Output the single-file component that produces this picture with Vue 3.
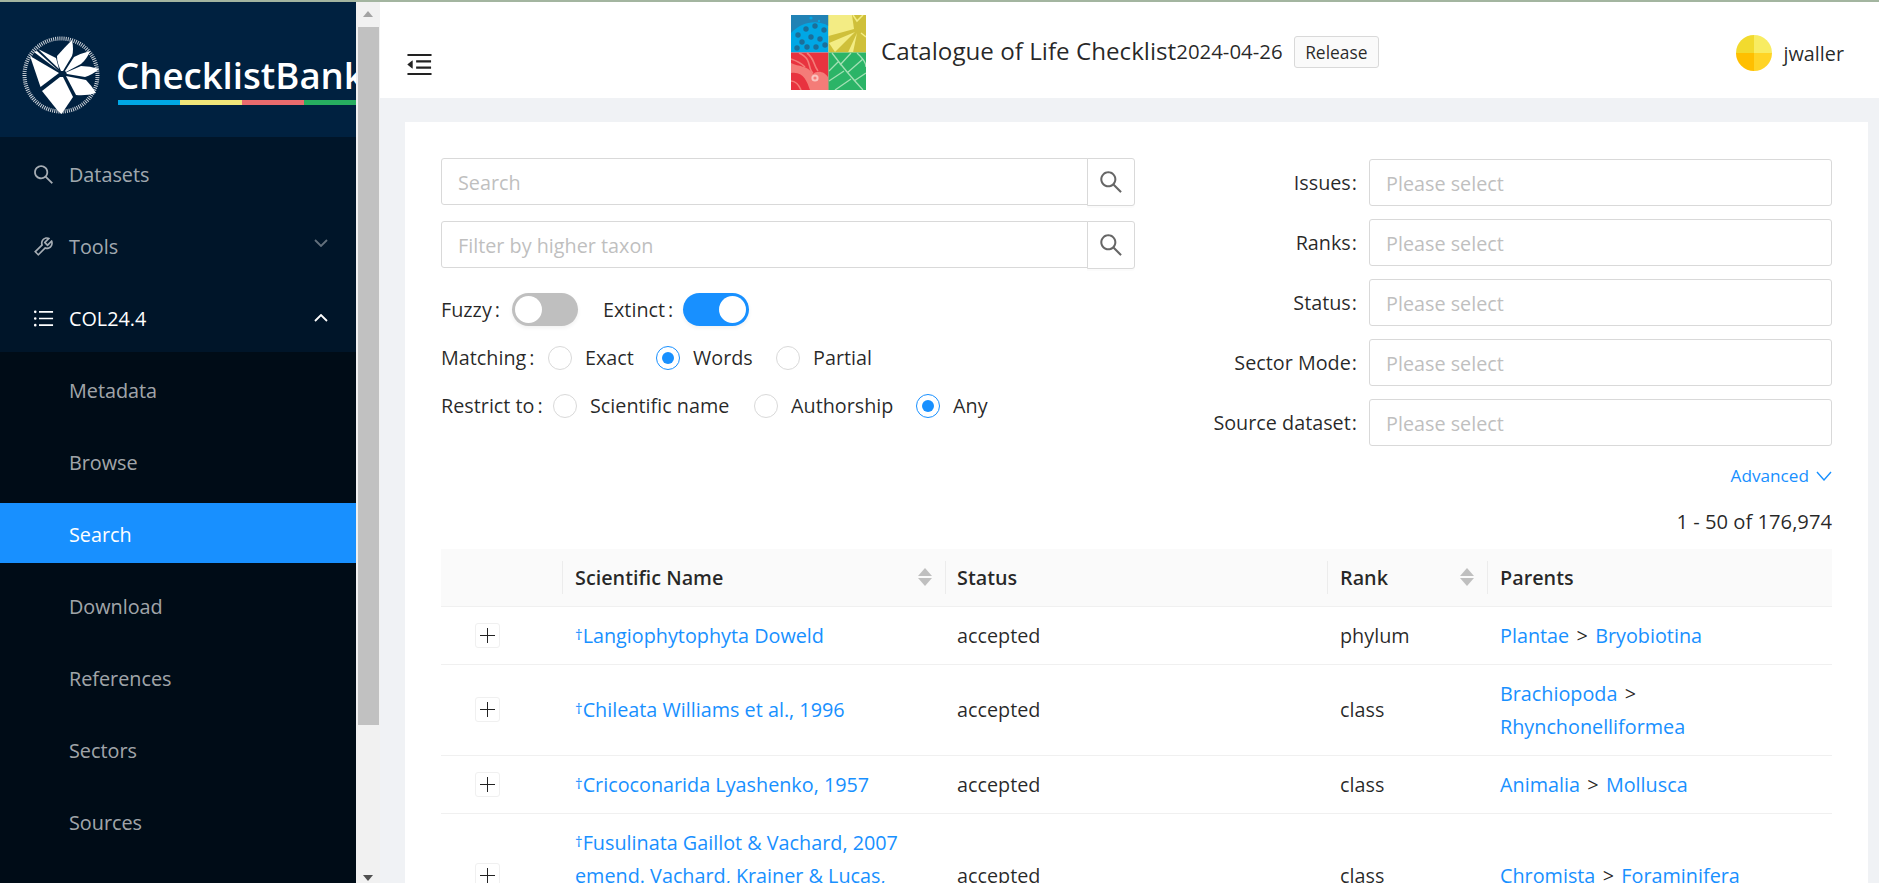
<script setup>
const topMenu = [
  { label: 'Datasets', icon: 'search' },
  { label: 'Tools', icon: 'tool', arrow: 'down' },
  { label: 'COL24.4', icon: 'list', arrow: 'up', open: true },
];
const subMenu = ['Metadata', 'Browse', 'Search', 'Download', 'References', 'Sectors', 'Sources'];
const selects = ['Issues', 'Ranks', 'Status', 'Sector Mode', 'Source dataset'];
const rows = [
  { name: 'Langiophytophyta Doweld', status: 'accepted', rank: 'phylum', parents: ['Plantae', 'Bryobiotina'] },
  { name: 'Chileata Williams et al., 1996', status: 'accepted', rank: 'class', parents: ['Brachiopoda', 'Rhynchonelliformea'] },
  { name: 'Cricoconarida Lyashenko, 1957', status: 'accepted', rank: 'class', parents: ['Animalia', 'Mollusca'] },
  { name: 'Fusulinata Gaillot & Vachard, 2007 emend. Vachard, Krainer & Lucas, 2013', status: 'accepted', rank: 'class', parents: ['Chromista', 'Foraminifera'] },
];
const searchPath = 'M909.6 854.5L649.9 594.8C690.2 542.7 712 479 712 412c0-80.2-31.3-155.4-87.9-212.1-56.6-56.7-132-87.9-212.1-87.9s-155.5 31.3-212.1 87.9C143.2 256.5 112 331.8 112 412c0 80.1 31.3 155.5 87.9 212.1C256.5 680.8 331.8 712 412 712c67 0 130.6-21.9 182.7-62l259.7 259.6a8.2 8.2 0 0011.6 0l43.6-43.5a8.2 8.2 0 000-11.6zM570.4 570.4C528 612.7 471.8 636 412 636s-116-23.3-158.4-65.6C211.3 528 188 471.8 188 412s23.3-116.1 65.6-158.4C296 211.3 352.2 188 412 188s116.1 23.2 158.4 65.6S636 352.2 636 412s-23.3 116.1-65.6 158.4z';
const toolPath = 'M876.6 239.5c-.5-.9-1.2-1.8-2-2.5-5-5-13.1-5-18.1 0L684.2 409.3l-67.9-67.9L788.7 169c.8-.8 1.4-1.6 2-2.5 3.6-6.1 1.6-13.9-4.5-17.5-98.2-58-226.8-44.7-311.3 39.7-67 67-89.2 162-66.5 247.4l-293 293c-3 3-2.8 7.9.3 11l169.7 169.7c3.1 3.1 8.1 3.3 11 .3l292.9-292.9c85.5 22.8 180.5.7 247.6-66.4 84.4-84.5 97.7-213.1 39.7-311.3zM786 499.8c-58.1 58.1-145.3 69.3-214.6 33.6l-8.8 8.8-.1-.1-274 274.1-79.2-79.2 230.1-230.1s0 .1.1.1l52.8-52.8c-35.7-69.3-24.5-156.5 33.6-214.6a184.2 184.2 0 01144-53.5L537 318.9a32.05 32.05 0 000 45.3l124.5 124.5a32.05 32.05 0 0045.3 0l132.8-132.8c3.7 51.8-14.4 104.8-53.6 143.9z';
const listPath = 'M912 192H328c-4.4 0-8 3.6-8 8v56c0 4.4 3.6 8 8 8h584c4.4 0 8-3.6 8-8v-56c0-4.4-3.6-8-8-8zm0 284H328c-4.4 0-8 3.6-8 8v56c0 4.4 3.6 8 8 8h584c4.4 0 8-3.6 8-8v-56c0-4.4-3.6-8-8-8zm0 284H328c-4.4 0-8 3.6-8 8v56c0 4.4 3.6 8 8 8h584c4.4 0 8-3.6 8-8v-56c0-4.4-3.6-8-8-8zM104 228a56 56 0 10112 0 56 56 0 10-112 0zm0 284a56 56 0 10112 0 56 56 0 10-112 0zm0 284a56 56 0 10112 0 56 56 0 10-112 0z';
const foldPath = 'M408 442h480c4.4 0 8-3.6 8-8v-56c0-4.4-3.6-8-8-8H408c-4.4 0-8 3.6-8 8v56c0 4.4 3.6 8 8 8zm-8 204c0 4.4 3.6 8 8 8h480c4.4 0 8-3.6 8-8v-56c0-4.4-3.6-8-8-8H408c-4.4 0-8 3.6-8 8v56zm504-486H120c-4.4 0-8 3.6-8 8v56c0 4.4 3.6 8 8 8h784c4.4 0 8-3.6 8-8v-56c0-4.4-3.6-8-8-8zm0 632H120c-4.4 0-8 3.6-8 8v56c0 4.4 3.6 8 8 8h784c4.4 0 8-3.6 8-8v-56c0-4.4-3.6-8-8-8zM115.4 518.9L271.7 642c5.8 4.6 14.4.5 14.4-6.9V388.9c0-7.4-8.5-11.5-14.4-6.9L115.4 505.1a8.74 8.74 0 000 13.8z';
const icons = { search: searchPath, tool: toolPath, list: listPath };
const dots = [
  [7, 20], [15, 14], [24, 11], [33, 15], [11, 27], [20, 22], [29, 24],
  [6, 33], [16, 32], [25, 32], [34, 30],
];
</script>

<template>
  <div class="page">
    <aside class="sider">
      <div class="brand">
        <svg class="brand-mark" viewBox="0 0 78 78">
          <circle cx="39" cy="39" r="36.5" fill="none" stroke="#fff" stroke-width="4" stroke-dasharray="1 1.1" opacity="0.8" />
          <g fill="#fff">
            <path d="M39 35 Q35 27 35 20 Q42 12 50 4 Q52 14 50 20 L41 35 Z" />
            <path d="M43 35 L52 21 Q60 17 68 15 Q65 23 59 28 L44 36 Z" />
            <path d="M44 36.5 L59 30 Q68 30 77 33 Q70 39 63 41 L45 38 Z" />
            <path d="M44 40 L64 44 Q70 50 74 57 Q64 60 54 59 Z" />
            <path d="M38 41 L20 55 L36 75 L39.5 78 L51 61 L41 41 Z" />
            <path d="M8 20 L37 37 L18.5 51 Z" />
            <path d="M16 13 L34 22 L37 33 Z" />
            <path d="M12 16 L15 15 L37 35 Z" />
          </g>
        </svg>
        <div class="brand-text">
          <div class="brand-name">ChecklistBank</div>
          <div class="brand-bar">
            <span class="seg-blue"></span><span class="seg-yellow"></span><span class="seg-red"></span><span class="seg-green"></span>
          </div>
        </div>
      </div>
      <nav class="menu">
        <div v-for="item in topMenu" :key="item.label" class="menu-item" :class="{ open: item.open }">
          <svg class="menu-icon" viewBox="64 64 896 896" fill="currentColor"><path :d="icons[item.icon]" /></svg>
          <span>{{ item.label }}</span>
          <svg v-if="item.arrow" class="menu-arrow" :class="item.arrow" viewBox="0 0 14 8" fill="none" stroke="currentColor" stroke-width="1.8">
            <path v-if="item.arrow === 'down'" d="M1 1 L7 7 L13 1" />
            <path v-else d="M1 7 L7 1 L13 7" />
          </svg>
        </div>
        <div class="submenu">
          <div v-for="label in subMenu" :key="label" class="sub-item" :class="{ selected: label === 'Search' }">{{ label }}</div>
        </div>
      </nav>
    </aside>

    <div class="sider-scroll">
      <span class="arrow-up"></span>
      <span class="thumb"></span>
      <span class="arrow-down"></span>
    </div>

    <div class="layout">
      <header class="topbar">
        <svg class="fold" viewBox="64 64 896 896" fill="#222"><path :d="foldPath" /></svg>
        <div class="title-wrap">
          <svg class="col-logo" viewBox="0 0 75 75">
            <rect width="37.5" height="37.5" fill="#00a7e5" />
            <path d="M0 0 H37.5 V11 C26 4 10 7 0 18 Z" fill="#2182b5" />
            <circle cx="20" cy="3" r="1.6" fill="#00a7e5" />
            <circle cx="28" cy="6" r="1.2" fill="#00a7e5" />
            <circle v-for="d in dots" :key="d.join()" :cx="d[0]" :cy="d[1]" r="2.7" fill="#1b6f9a" />

            <rect x="37.5" width="37.5" height="37.5" fill="#cfc03a" />
            <path d="M37.5 0 H61 L63 14 L37.5 21 Z" fill="#f3ec84" />
            <path d="M38 28 L64 17 L44 37" fill="#f3ec84" />
            <path d="M57 37.5 L66 18 L62 37.5 Z" fill="#f3ec84" />
            <path d="M62 0 L66 6 L72 0 M70 18 L75 22" stroke="#f3ec84" stroke-width="1.5" fill="none" />

            <rect y="37.5" width="37.5" height="37.5" fill="#e8333f" />
            <path d="M0 58 C12 56 16 66 19 75 H37.5 V63 C34 56 26 55 22 59 C16 50 8 52 0 48 Z" fill="#f47c78" />
            <path d="M8 38 C22 44 16 54 22 58 M16 38 C24 44 22 50 27 56 M0 44 C6 46 10 48 14 52 M0 66 C4 66 8 70 10 75" stroke="#f47c78" stroke-width="1.6" fill="none" />
            <circle cx="24" cy="63" r="3.6" fill="#f9c4c0" />
            <circle cx="24" cy="63" r="1.6" fill="#f47c78" />

            <rect x="37.5" y="37.5" width="37.5" height="37.5" fill="#2bb467" />
            <path d="M41 38 C50 50 60 62 72 75 M49 50 L60 38 M56 58 L72 44 M63 66 L75 58 M47 47 L38 56 M53 56 L38 66 M60 64 L44 75" stroke="#a3e0b4" stroke-width="1.3" fill="none" />
            <path d="M66 38 C75 46 75 50 75 52" stroke="#a3e0b4" stroke-width="1.3" fill="none" />
          </svg>
          <span class="title">Catalogue of Life Checklist</span>
          <span class="date">2024-04-26</span>
          <span class="tag">Release</span>
        </div>
        <div class="user">
          <svg class="avatar" viewBox="0 0 36 36">
            <path d="M18 18 V0 A18 18 0 0 0 0 18 Z" fill="#f2da2e" />
            <path d="M18 18 V0 A18 18 0 0 1 36 18 Z" fill="#f8ec62" />
            <path d="M18 18 H0 A18 18 0 0 0 18 36 Z" fill="#ffbf00" />
            <path d="M18 18 H36 A18 18 0 0 1 18 36 Z" fill="#ffd426" />
          </svg>
          <span>jwaller</span>
        </div>
      </header>

      <main class="content">
        <section class="card">
          <div class="filters">
            <div class="filters-left">
              <div class="search-box">
                <div class="search-input">Search</div>
                <button class="search-btn">
                  <svg viewBox="64 64 896 896" fill="#666"><path :d="searchPath" /></svg>
                </button>
              </div>
              <div class="search-box">
                <div class="search-input">Filter by higher taxon</div>
                <button class="search-btn">
                  <svg viewBox="64 64 896 896" fill="#666"><path :d="searchPath" /></svg>
                </button>
              </div>
              <div class="opt-row switches">
                <span class="lbl lbl-fuzzy">Fuzzy<i>:</i></span>
                <span class="switch"><b></b></span>
                <span class="lbl lbl-extinct">Extinct<i>:</i></span>
                <span class="switch on"><b></b></span>
              </div>
              <div class="opt-row radios">
                <span class="lbl lbl-match">Matching<i>:</i></span>
                <span class="radio"></span><span class="rt rt-exact">Exact</span>
                <span class="radio on"></span><span class="rt rt-words">Words</span>
                <span class="radio"></span><span class="rt">Partial</span>
              </div>
              <div class="opt-row radios restrict">
                <span class="lbl lbl-restrict">Restrict to<i>:</i></span>
                <span class="radio"></span><span class="rt rt-sci">Scientific name</span>
                <span class="radio"></span><span class="rt rt-auth">Authorship</span>
                <span class="radio on"></span><span class="rt">Any</span>
              </div>
            </div>
            <div class="filters-right">
              <div v-for="label in selects" :key="label" class="select-row">
                <label>{{ label }}<i>:</i></label>
                <div class="select">Please select</div>
              </div>
              <a class="advanced">Advanced
                <svg viewBox="0 0 16 10" fill="none" stroke="#1890ff" stroke-width="1.4"><path d="M1 1 L8 9 L15 1" /></svg>
              </a>
            </div>
          </div>
          <div class="count">1 - 50 of 176,974</div>

          <div class="table">
            <div class="thead">
              <div class="c-expand"></div>
              <div class="c-name th sep">Scientific Name<span class="sorter"><i class="up"></i><i class="down"></i></span></div>
              <div class="c-status th sep">Status</div>
              <div class="c-rank th sep">Rank<span class="sorter"><i class="up"></i><i class="down"></i></span></div>
              <div class="c-parents th sep">Parents</div>
            </div>
            <div v-for="row in rows" :key="row.name" class="trow">
              <div class="c-expand"><span class="plus"></span></div>
              <div class="c-name"><a><span class="dagger">†</span>{{ row.name }}</a></div>
              <div class="c-status">{{ row.status }}</div>
              <div class="c-rank">{{ row.rank }}</div>
              <div class="c-parents"><a>{{ row.parents[0] }}</a> &gt; <a>{{ row.parents[1] }}</a></div>
            </div>
          </div>
        </section>
      </main>
    </div>
  </div>
</template>

<style>
html, body {
  margin: 0;
  height: 100%;
  overflow: hidden;
}
</style>

<style scoped>
.page {
  display: flex;
  height: 881px;
  overflow: hidden;
  border-top: 2px solid #a3b5a0;
  font-family: "Open Sans", "Noto Sans", sans-serif;
  font-size: 19.8px;
  line-height: 33px;
  color: rgba(0, 0, 0, 0.85);
  background: #f0f2f5;
}

/* sidebar */
.sider {
  width: 356px;
  flex: none;
  background: #001529;
  overflow: hidden;
}
.brand {
  display: flex;
  height: 135px;
  padding-left: 22px;
  box-sizing: border-box;
  align-items: center;
  gap: 16px;
  background: #002140;
  white-space: nowrap;
}
.brand-mark {
  width: 78px;
  height: 78px;
  margin-top: 11px;
  flex: none;
}
.brand-text {
  padding-top: 19px;
}
.brand-name {
  font-size: 36.6px;
  line-height: 44px;
  font-weight: 600;
  color: #fff;
}
.brand-bar {
  display: flex;
  height: 5px;
  margin-top: 3px;
  margin-left: 2px;
}
.brand-bar span {
  width: 62px;
  flex: none;
}
.seg-blue { background: #00a7e5; }
.seg-yellow { background: #f0e67a; }
.seg-red { background: #e96b6e; }
.seg-green { background: #27ae60; }

.menu {
  padding-top: 7px;
}
.menu-item {
  display: flex;
  align-items: center;
  height: 60px;
  margin-bottom: 12px;
  padding-left: 33px;
  color: rgba(255, 255, 255, 0.65);
}
.menu-item.open {
  color: #fff;
  margin-bottom: 4px;
}
.menu-icon {
  width: 21px;
  height: 21px;
  margin-right: 15px;
  flex: none;
}
.menu-arrow {
  width: 14px;
  height: 8px;
  margin-left: auto;
  margin-right: 28px;
}
.menu-arrow.down {
  margin-top: -7px;
  opacity: 0.6;
}
.submenu {
  background: #000c17;
  padding: 7px 0 20px;
}
.sub-item {
  height: 60px;
  line-height: 64px;
  margin-bottom: 12px;
  padding-left: 69px;
  color: rgba(255, 255, 255, 0.65);
}
.sub-item.selected {
  background: #1890ff;
  color: #fff;
}

/* sidebar scrollbar */
.sider-scroll {
  display: flex;
  flex-direction: column;
  width: 24px;
  flex: none;
  padding-bottom: 2px;
  box-sizing: border-box;
  background: #f1f1f1;
}
.thumb {
  height: 698px;
  margin: 10px 1px 0 2px;
  background: #c1c1c1;
}
.arrow-up, .arrow-down {
  align-self: flex-start;
  margin-left: 7px;
  width: 0;
  height: 0;
  border-left: 5.5px solid transparent;
  border-right: 5.5px solid transparent;
}
.arrow-up {
  margin-top: 9px;
  border-bottom: 6px solid #a3a3a3;
}
.arrow-down {
  margin-top: auto;
  border-top: 6px solid #505050;
}

/* main */
.layout {
  flex: 1;
  min-width: 0;
}
.topbar {
  display: flex;
  align-items: center;
  height: 96px;
  background: #fff;
  padding: 0 35px 0 25.5px;
}
.fold {
  width: 27px;
  height: 27px;
  margin-top: 29px;
  flex: none;
}
.title-wrap {
  display: flex;
  align-items: center;
  margin-left: 358.5px;
  margin-top: 4px;
}
.col-logo {
  width: 75px;
  height: 75px;
  flex: none;
}
.title {
  margin-left: 15px;
  margin-top: -3px;
  font-size: 24.2px;
  font-weight: 500;
  white-space: nowrap;
}
.date {
  margin-top: -1px;
  font-size: 20.4px;
  white-space: nowrap;
}
.tag {
  margin-left: 11px;
  padding: 0 10.5px;
  height: 32px;
  line-height: 30px;
  box-sizing: border-box;
  border: 1px solid #d9d9d9;
  border-radius: 3px;
  background: #fafafa;
  font-size: 17.4px;
}
.user {
  display: flex;
  align-items: center;
  gap: 12px;
  margin-left: auto;
  margin-top: 6px;
}
.avatar {
  width: 36px;
  height: 36px;
  flex: none;
}

.content {
  padding: 24px 11px 0 25px;
}
.card {
  background: #fff;
  padding: 36px;
  min-height: 800px;
}
.filters {
  display: flex;
  justify-content: space-between;
}
.filters-left {
  width: 694px;
  flex: none;
}
.search-box {
  display: flex;
  height: 47px;
  margin-bottom: 16px;
  box-sizing: border-box;
}
.search-input {
  flex: 1;
  border: 1px solid #d9d9d9;
  border-radius: 3px 0 0 3px;
  padding-left: 16px;
  line-height: 47px;
  color: #bfbfbf;
}
.search-btn {
  width: 48px;
  height: 48px;
  margin-left: -1px;
  padding: 0;
  background: #fff;
  border: 1px solid #d9d9d9;
  border-radius: 0 3px 3px 0;
  box-shadow: 0 2px 0 rgba(0, 0, 0, 0.015);
}
.search-btn svg {
  display: block;
  width: 24px;
  height: 24px;
  margin: 0 auto;
}
.opt-row {
  display: flex;
  align-items: center;
  height: 33px;
  white-space: nowrap;
}
.opt-row.switches {
  margin-top: 25px;
}
.opt-row.radios {
  margin-top: 15px;
}
.lbl i {
  font-style: normal;
  margin: 0 3px;
}
.select-row i {
  font-style: normal;
  margin: 0 3px 0 1px;
}
.lbl-fuzzy { width: 71px; }
.lbl-extinct { width: 80px; margin-left: 25px; }
.lbl-match { width: 107px; }
.lbl-restrict { width: 112px; }
.switch {
  position: relative;
  width: 66px;
  height: 33px;
  border-radius: 17px;
  background: #bfbfbf;
  flex: none;
  box-shadow: 0 2px 4px rgba(0, 0, 0, 0.06);
}
.switch b {
  position: absolute;
  top: 3px;
  left: 3px;
  width: 27px;
  height: 27px;
  border-radius: 50%;
  background: #fff;
}
.switch.on {
  background: #1890ff;
}
.switch.on b {
  left: 36px;
}
.radio {
  position: relative;
  width: 24px;
  height: 24px;
  box-sizing: border-box;
  border: 1px solid #d9d9d9;
  border-radius: 50%;
  flex: none;
  margin-right: 13px;
}
.radio.on {
  border-color: #1890ff;
}
.radio.on::after {
  content: "";
  position: absolute;
  inset: 5px;
  border-radius: 50%;
  background: #1890ff;
}
.rt-exact { width: 71px; }
.rt-words { width: 83px; }
.rt-sci { width: 164px; }
.rt-auth { width: 125px; }

.filters-right {
  flex: 1;
  margin-left: 40px;
}
.select-row {
  display: flex;
  align-items: center;
  margin-bottom: 13px;
  margin-top: 1px;
}
.select-row label {
  flex: 1;
  text-align: right;
  margin-right: 9px;
  white-space: nowrap;
}
.select {
  width: 463px;
  height: 47px;
  box-sizing: border-box;
  flex: none;
  border: 1px solid #d9d9d9;
  border-radius: 3px;
  padding-left: 16px;
  line-height: 47px;
  color: #bfbfbf;
}
.advanced {
  display: flex;
  align-items: center;
  justify-content: flex-end;
  gap: 7px;
  margin-top: 16.5px;
  height: 26px;
  color: #1890ff;
  font-size: 17.2px;
}
.advanced svg {
  width: 16px;
  height: 10px;
}
.count {
  text-align: right;
  margin-top: 16px;
  height: 33px;
  font-size: 20.2px;
}

/* table */
.table {
  margin-top: 11px;
}
.thead, .trow {
  display: flex;
}
.thead {
  height: 57px;
  background: #fafafa;
  border-bottom: 1px solid #f0f0f0;
  font-weight: 600;
  align-items: center;
}
.trow {
  align-items: center;
  padding: 12px 0;
  border-bottom: 1px solid #f0f0f0;
}
.c-expand {
  width: 121px;
  flex: none;
  display: flex;
  justify-content: flex-start;
}
.c-name {
  width: 383px;
  flex: none;
  padding: 0 35px 0 13px;
  box-sizing: border-box;
}
.c-status {
  width: 382px;
  flex: none;
  padding: 0 12px;
  box-sizing: border-box;
}
.c-rank {
  width: 160px;
  flex: none;
  padding: 0 12px 0 13px;
  box-sizing: border-box;
}
.c-parents {
  flex: 1;
  padding: 0 12px 0 13px;
  box-sizing: border-box;
  word-spacing: 2.2px;
}
.th {
  position: relative;
  display: flex;
  align-items: center;
  justify-content: space-between;
  height: 57px;
  padding-right: 13px;
  word-spacing: 0;
}
.sep::before {
  content: "";
  position: absolute;
  left: 0;
  top: 12px;
  bottom: 12px;
  width: 1px;
  background: #ececec;
}
.sorter {
  display: flex;
  flex-direction: column;
  gap: 2px;
}
.sorter i {
  width: 0;
  height: 0;
  border-left: 7px solid transparent;
  border-right: 7px solid transparent;
}
.sorter .up {
  border-bottom: 8px solid #bfbfbf;
}
.sorter .down {
  border-top: 8px solid #bfbfbf;
}
a {
  color: #1890ff;
  text-decoration: none;
}
.dagger {
  font-size: 15px;
  line-height: 0;
  vertical-align: 3px;
}
.plus {
  position: relative;
  display: block;
  width: 25px;
  height: 25px;
  margin-left: 34px;
  box-sizing: border-box;
  border: 1px solid #f0f0f0;
  border-radius: 3px;
  background: #fff;
}
.plus::before, .plus::after {
  content: "";
  position: absolute;
  background: #222;
}
.plus::before {
  left: 4px;
  right: 4px;
  top: 11px;
  height: 1px;
}
.plus::after {
  top: 4px;
  bottom: 4px;
  left: 11px;
  width: 1px;
}
</style>
